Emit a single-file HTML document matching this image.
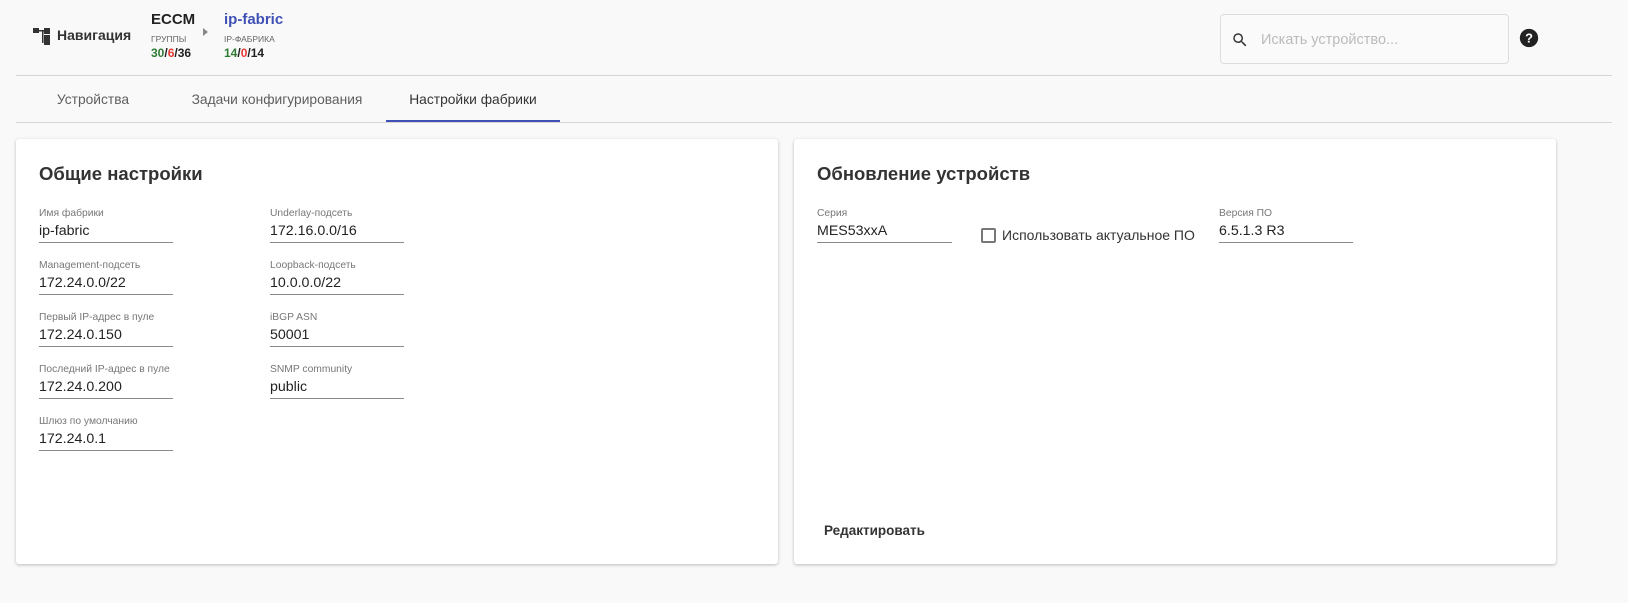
<!DOCTYPE html>
<html><head><meta charset="utf-8"><style>
*{box-sizing:border-box;margin:0;padding:0}
body{width:1628px;height:603px;background:#f9f9f9;font-family:"Liberation Sans",sans-serif;color:#212121;position:relative;overflow:hidden}
.abs{position:absolute}
.line{height:1px;background:#d6d6d6}
.tab{top:75px;height:47px;line-height:50px;font-size:13.8px;color:#5f5f5f;text-align:center}
.card{background:#fff;border-radius:3px;box-shadow:0 1px 3px rgba(0,0,0,.25)}
.h{font-size:18.5px;font-weight:bold;color:#333}
.f{position:absolute;width:134px;height:35px;border-bottom:1px solid #8a8a8a}
.f .l{font-size:10.3px;color:#777;position:absolute;top:0;left:0;white-space:nowrap}
.f .v{font-size:14.2px;color:#222;position:absolute;top:15px;left:0;white-space:nowrap}
</style></head><body>
<svg class="abs" style="left:33px;top:28px" width="20" height="18" viewBox="0 0 20 18"><rect x="0" y="0" width="6" height="5" fill="#333"/><rect x="6" y="2" width="6" height="1.5" fill="#333"/><rect x="9" y="2" width="1.5" height="13" fill="#333"/><rect x="11" y="0" width="6" height="6" fill="#333"/><rect x="11" y="7" width="6" height="5" fill="#333"/><rect x="11" y="12" width="6" height="5" fill="#333"/></svg>
<div class="abs" style="left:57px;top:27px;font-size:14px;font-weight:bold;color:#333">Навигация</div>
<div class="abs" style="left:151px;top:11px;font-size:15px;font-weight:bold;color:#222">ECCM</div>
<div class="abs" style="left:151px;top:34px;font-size:8.5px;color:#666">ГРУППЫ</div>
<div class="abs" style="left:151px;top:46px;font-size:12px;font-weight:bold"><span style="color:#2e7d32">30</span>/<span style="color:#e53935">6</span>/36</div>
<div class="abs" style="left:203px;top:28px;width:0;height:0;border-left:5px solid #888;border-top:4px solid transparent;border-bottom:4px solid transparent"></div>
<div class="abs" style="left:224px;top:11px;font-size:15px;font-weight:bold;color:#3f51b5">ip-fabric</div>
<div class="abs" style="left:224px;top:34px;font-size:8.5px;color:#666">IP-ФАБРИКА</div>
<div class="abs" style="left:224px;top:46px;font-size:12px;font-weight:bold"><span style="color:#2e7d32">14</span>/<span style="color:#e53935">0</span>/14</div>
<div class="abs" style="left:1220px;top:14px;width:289px;height:50px;border:1px solid #ddd;border-radius:4px;background:#fafafa"></div>
<svg class="abs" style="left:1231px;top:31px" width="18" height="18" viewBox="0 0 24 24"><path fill="#333" d="M15.5 14h-.79l-.28-.27A6.47 6.47 0 0016 9.5 6.5 6.5 0 109.5 16c1.61 0 3.09-.59 4.23-1.57l.27.28v.79l5 4.99L20.49 19l-4.99-5zm-6 0C7.01 14 5 11.99 5 9.5S7.01 5 9.5 5 14 7.01 14 9.5 11.99 14 9.5 14z"/></svg>
<div class="abs" style="left:1261px;top:32px;font-size:14.5px;color:#bbb">Искать устройство...</div>
<svg class="abs" style="left:1518px;top:27px" width="22" height="22" viewBox="0 0 24 24"><circle cx="12" cy="12" r="10" fill="#222"/><text x="12" y="17" text-anchor="middle" font-size="14" font-weight="bold" fill="#fff" font-family="Liberation Sans">?</text></svg>
<div class="abs line" style="left:16px;top:75px;width:1596px"></div>
<div class="abs tab" style="left:33px;width:120px">Устройства</div>
<div class="abs tab" style="left:177px;width:200px">Задачи конфигурирования</div>
<div class="abs tab" style="left:386px;width:174px;color:#333">Настройки фабрики</div>
<div class="abs" style="left:386px;top:120px;width:174px;height:2px;background:#3f51b5"></div>
<div class="abs line" style="left:16px;top:122px;width:1596px"></div>

<div class="abs card" style="left:16px;top:139px;width:762px;height:425px">
<div class="abs h" style="left:23px;top:24px">Общие настройки</div>
<div class="f" style="left:23px;top:69px"><div class="l">Имя фабрики</div><div class="v">ip-fabric</div></div>
<div class="f" style="left:23px;top:121px"><div class="l">Management-подсеть</div><div class="v">172.24.0.0/22</div></div>
<div class="f" style="left:23px;top:173px"><div class="l">Первый IP-адрес в пуле</div><div class="v">172.24.0.150</div></div>
<div class="f" style="left:23px;top:225px"><div class="l">Последний IP-адрес в пуле</div><div class="v">172.24.0.200</div></div>
<div class="f" style="left:23px;top:277px"><div class="l">Шлюз по умолчанию</div><div class="v">172.24.0.1</div></div>
<div class="f" style="left:254px;top:69px"><div class="l">Underlay-подсеть</div><div class="v">172.16.0.0/16</div></div>
<div class="f" style="left:254px;top:121px"><div class="l">Loopback-подсеть</div><div class="v">10.0.0.0/22</div></div>
<div class="f" style="left:254px;top:173px"><div class="l">iBGP ASN</div><div class="v">50001</div></div>
<div class="f" style="left:254px;top:225px"><div class="l">SNMP community</div><div class="v">public</div></div>
</div>

<div class="abs card" style="left:794px;top:139px;width:762px;height:425px">
<div class="abs h" style="left:23px;top:24px">Обновление устройств</div>
<div class="f" style="left:23px;top:69px;width:135px"><div class="l">Серия</div><div class="v">MES53xxA</div></div>
<div class="abs" style="left:187px;top:89px;width:15px;height:15px;border:2px solid #777;border-radius:2px"></div>
<div class="abs" style="left:208px;top:88px;font-size:14px;color:#333">Использовать актуальное ПО</div>
<div class="f" style="left:425px;top:69px"><div class="l">Версия ПО</div><div class="v">6.5.1.3 R3</div></div>
<div class="abs" style="left:30px;top:384px;font-size:13.5px;font-weight:bold;color:#333">Редактировать</div>
</div>
</body></html>
